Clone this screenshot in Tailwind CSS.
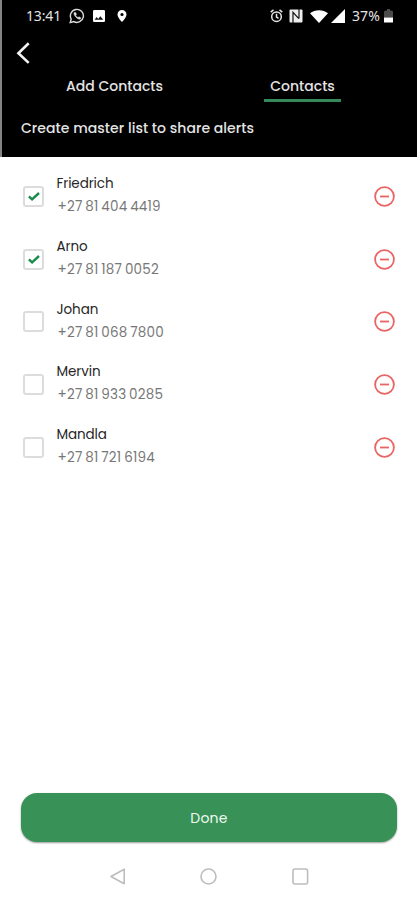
<!DOCTYPE html>
<html lang="en">
<head>
  <meta charset="UTF-8" />
  <meta name="viewport" content="width=device-width, initial-scale=1.0" />
  <title>Contacts</title>
  <script src="https://cdn.jsdelivr.net/npm/@tailwindcss/browser@4"></script>
</head>
<body class="bg-white font-[Poppins,Inter,sans-serif]">
  <div class="w-[417px] h-[900px] flex flex-col overflow-hidden">

    <header class="h-[157px] shrink-0 bg-black text-[#e4e4e4] border-l-2 border-[#858585] flex flex-col">
      <!-- status bar -->
      <div class="h-8 pl-6 pr-6 flex items-center justify-between font-['Noto_Sans',sans-serif]">
        <div class="flex items-center">
          <span class="w-[43px] text-[14px] leading-8 tracking-[-0.15px]">13:41</span>
          <svg class="w-4 h-4" viewBox="0 0 16 16" fill="none" stroke="#ddd" stroke-width="1.4">
            <path d="M1.2 14.6l1-3.6a6.5 6.5 0 1 1 2.6 2.6z" />
            <path d="M5.2 4.6c-.8 1 .1 3 1.7 4.6s3.6 2.5 4.6 1.7l.3-1.1-1.8-1-.9.8c-.9-.4-2-1.4-2.4-2.4l.8-.9-.9-1.8z" fill="#ddd" stroke-width=".5" />
          </svg>
          <svg class="w-3 h-3 ml-2" viewBox="0 0 12 12">
            <rect width="12" height="12" rx="1.3" fill="#fff" />
            <path d="M1.6 9.8l2.1-2.7 1.5 1.8 2.1-2.7 3 3.6z" fill="#111" />
          </svg>
          <svg class="w-[10px] h-3 ml-[12px]" viewBox="0 0 10 12">
            <path d="M5 0a4.5 4.5 0 0 0-4.5 4.5C.5 7.5 5 12 5 12s4.5-4.5 4.5-7.5A4.5 4.5 0 0 0 5 0zm0 2.9a1.6 1.6 0 1 1 0 3.2 1.6 1.6 0 0 1 0-3.2z" fill="#fff" />
          </svg>
        </div>
        <div class="flex items-center">
          <svg class="w-[13px] h-[14px]" viewBox="0 0 13 14" fill="none" stroke="#e5e5e5" stroke-width="1.5">
            <circle cx="6.5" cy="7.7" r="4.8" />
            <path d="M.7 3.2L3.5.9M12.3 3.2L9.5.9M6.5 4.8V8l2 1.3" />
          </svg>
          <svg class="w-[14px] h-[14px] ml-[6px]" viewBox="0 0 14 14">
            <rect x=".5" y=".5" width="13" height="13" rx="1" fill="#ededed" />
            <path d="M4 14V3.3L9.8 9.7M10 0v9.5" fill="none" stroke="#111" stroke-width="1.2" />
          </svg>
          <svg class="w-[18px] h-[13px] ml-[7px]" viewBox="0 0 18 13">
            <path d="M0 3.3C5-.7 13-.7 18 3.3L9 13z" fill="#fff" />
          </svg>
          <svg class="w-[14px] h-[14px] ml-[3px]" viewBox="0 0 14 14">
            <path d="M14 0v14H0z" fill="#fff" />
          </svg>
          <span class="w-[32px] ml-[7px] text-[14px] leading-8 tracking-[0.1px]">37%</span>
          <svg class="w-[9px] h-[14px]" viewBox="0 0 9 14">
            <path d="M0 3Q0 1.5 1.5 1.5H3V0h3v1.5h1.5Q9 1.5 9 3v5.500H0z" fill="#4b4b4b" />
            <path d="M0 8.5h9v5H0z" fill="#fff" />
          </svg>
        </div>
      </div>

      <div class="h-[42px] pl-[14px] pt-[10px]">
        <svg class="w-[14px] h-[22px]" viewBox="0 0 14 22" fill="none" stroke="#f2f2f2" stroke-width="2.6">
          <path d="M12.7 1.2L2.4 11.2l10.3 9.7" />
        </svg>
      </div>

      <nav class="h-7 flex text-[14px] font-medium leading-6">
        <div class="w-[220px] pl-16"><span>Add Contacts</span></div>
        <div class="ml-[42px] w-[77px] h-7 text-center border-b-3 border-[#35885a]"><span>Contacts</span></div>
      </nav>

      <p class="pl-[19px] pt-[14px] text-[14px] leading-[25px] font-medium tracking-[0.05px] whitespace-nowrap">Create master list to share alerts</p>
    </header>

    <main class="flex-1 pt-2 pl-[23px] pr-[22px]">
      <ul id="contact-list"></ul>
    </main>

    <footer class="h-[107px] shrink-0 pl-[21px] pr-[20px]">
      <button class="block w-full h-[49px] pt-0.5 rounded-2xl bg-[#389257] text-[#eef8f0] text-[14px] tracking-[0.2px] shadow-[0_1px_2px_rgba(0,0,0,0.4)]">Done</button>
      <div class="h-[68px] pl-[88px] flex items-center text-[#bdbdbd]">
        <svg class="w-4 h-[17px]" viewBox="0 0 16 17" fill="none" stroke="currentColor" stroke-width="1.6" stroke-linejoin="round">
          <path d="M15.2 1.2v14.6L2 8.5z" />
        </svg>
        <svg class="w-[17px] h-[17px] ml-[75px]" viewBox="0 0 17 17" fill="none" stroke="currentColor" stroke-width="1.6">
          <circle cx="8.5" cy="8.5" r="7.5" />
        </svg>
        <svg class="w-[17px] h-[17px] ml-[75px]" viewBox="0 0 17 17" fill="none" stroke="currentColor" stroke-width="1.6">
          <rect x="1" y="1" width="14.6" height="15" rx="2" />
        </svg>
      </div>
    </footer>
  </div>

  <script>
    const contacts = [
      { name: 'Friedrich', phone: '+27 81 404 4419', checked: true },
      { name: 'Arno', phone: '+27 81 187 0052', checked: true },
      { name: 'Johan', phone: '+27 81 068 7800', checked: false },
      { name: 'Mervin', phone: '+27 81 933 0285', checked: false },
      { name: 'Mandla', phone: '+27 81 721 6194', checked: false },
    ];
    const check = '<svg class="w-3 h-[9px]" viewBox="0 0 12 9" fill="none" stroke="#188c4b" stroke-width="2.4"><path d="M.9 4.3l3.2 3L11 1" /></svg>';

    document.getElementById('contact-list').innerHTML = contacts.map(c => `
      <li class="h-[62.7px] flex items-center">
        <div class="w-[21px] h-[21px] rounded-[3px] border-2 border-[#dcdcdc] flex items-center justify-center">${c.checked ? check : ''}</div>
        <div class="flex-1 pl-[12.5px] pb-[2px] whitespace-nowrap">
          <div class="text-[13.5px] leading-6 tracking-[-0.1px] text-[#262626]">${c.name}</div>
          <div class="pl-px text-[13.5px] leading-[22px] tracking-[0.2px] [word-spacing:-1px] text-[#777]">${c.phone}</div>
        </div>
        <svg class="w-[21px] h-[21px]" viewBox="0 0 21 21" fill="none" stroke="#ea6464" stroke-width="1.8">
          <circle cx="10.5" cy="10.5" r="9.4" />
          <path d="M6 10.5h9" />
        </svg>
      </li>`).join('');
  </script>
</body>
</html>
